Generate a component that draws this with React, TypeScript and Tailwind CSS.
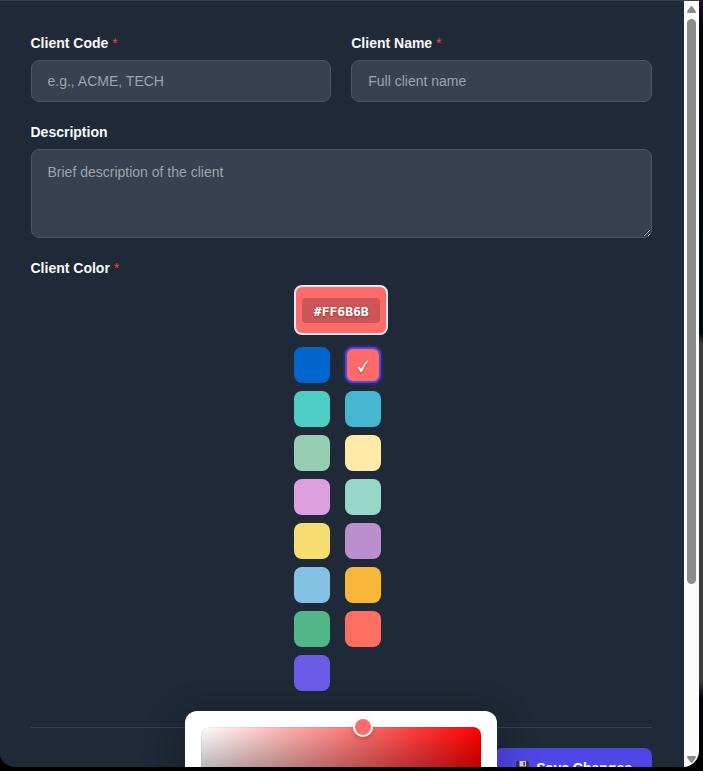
import React from 'react';

const swatches = [
  'bg-[#0066cc]', 'bg-[#ff6b6b]', 'bg-[#4ecdc4]', 'bg-[#45b7d1]', 'bg-[#96ceb4]',
  'bg-[#ffeaa7]', 'bg-[#dda0dd]', 'bg-[#98d8c8]', 'bg-[#f7dc6f]', 'bg-[#bb8fce]',
  'bg-[#85c1e2]', 'bg-[#f8b739]', 'bg-[#52b788]', 'bg-[#ff6f61]', 'bg-[#6c5ce7]',
];

function Label({ text, required }: { text: string; required?: boolean }) {
  return (
    <label className="block h-[17px] text-[14px] leading-[17px] font-bold text-[#f9fafb]">
      {text}
      {required && <span className="font-normal text-[#ef4444]"> *</span>}
    </label>
  );
}

const field =
  'block w-full rounded-lg border border-[#4b5563] bg-[#374151] px-4 text-[14px] leading-[17px] text-white placeholder:text-[#9ca3af] outline-none';

function Floppy() {
  return (
    <svg width="13" height="13" viewBox="0 0 13 13" className="relative -top-px left-px">
      <path d="M1 0h10.500l1.500 1.500V13H0V1z" fill="#3b3247" />
      <path d="M3.500 0h6.500v5.500H3.500z" fill="#d9d3e2" />
      <path d="M7.300 1h1.700v3.500H7.300z" fill="#4a3f58" />
      <path d="M2.500 7.500h8V13h-8z" fill="#ece8f4" />
    </svg>
  );
}

function Check() {
  return (
    <svg width="12" height="13" viewBox="0 0 12 13" className="mt-[3px] drop-shadow-[0_1px_1px_rgba(0,0,0,0.35)]">
      <path
        d="M.6 7.700Q1.500 6.500 2.700 7L4 9.200Q6.500 3.600 10.200.7L11.300.8Q7.800 5 5.200 11.200Q4.500 12 3.300 11.900Q2.200 9 .6 7.700z"
        fill="#fff"
      />
    </svg>
  );
}

function Scrollbar() {
  return (
    <div className="flex h-[766px] w-[15px] flex-none flex-col items-center bg-[#fcfcfc]">
      <svg className="mt-[5px] flex-none" width="9" height="7" viewBox="0 0 9 7">
        <path d="M4.500 0Q5 0 5.600.8L8.600 5Q9.400 7 8 7H1Q-.4 7 .4 5L3.400.8Q4 0 4.500 0z" fill="#8b8b8b" />
      </svg>
      <div className="mt-[6px] h-[565px] w-[9px] flex-none rounded-full bg-[#8b8b8b]" />
      <div className="flex-1" />
      <svg className="mb-[4px] flex-none" width="9" height="7" viewBox="0 0 9 7">
        <path d="M4.500 7Q5 7 5.600 6.200L8.600 2Q9.400 0 8 0H1Q-.4 0 .4 2L3.400 6.200Q4 7 4.500 7z" fill="#8b8b8b" />
      </svg>
    </div>
  );
}

function Picker() {
  return (
    <div className="absolute top-[711px] left-[186px] z-10 w-[312px] rounded-xl bg-white p-4 shadow-[0_10px_40px_rgba(0,0,0,0.3)]">
      <div className="relative h-[150px] rounded-lg bg-[linear-gradient(to_top,#000,transparent),linear-gradient(to_right,#fff,transparent)] bg-[#ff0000] shadow-[inset_0_0_0_1px_rgba(0,0,0,0.05)]">
        <div className="absolute -top-[10px] left-[152px] size-5 rounded-full border-2 border-white bg-[#ff6b6b] shadow-[0_2px_4px_rgba(0,0,0,0.2)]" />
      </div>
    </div>
  );
}

export default function App() {
  return (
    <div className="flex h-[771px] w-[703px] overflow-hidden bg-black bg-[linear-gradient(#1c102b_0px,#07050b_26px,#020305_45px,#02060b_333px,#3c3c3c_344px,#3c3c3c_680px,#02040a_698px,#000_771px)] font-['Liberation_Sans',Arial,sans-serif]">
      <div className="relative -ml-px flex h-[767px] w-[700px] flex-none overflow-hidden rounded-b-2xl border-t border-[#374151] bg-[#1f2937]">
        <div className="h-[766px] w-[685px] flex-none overflow-hidden pt-[34px] pr-8 pl-[31.5px]">
          <div className="grid grid-cols-2 gap-5">
            <div>
              <Label text="Client Code" required />
              <input className={`${field} mt-2 h-[42px]`} placeholder="e.g., ACME, TECH" />
            </div>
            <div>
              <Label text="Client Name" required />
              <input className={`${field} mt-2 h-[42px]`} placeholder="Full client name" />
            </div>
          </div>
          <div className="mt-[22px]">
            <Label text="Description" />
            <textarea className={`${field} mt-2 h-[89px] resize-y py-[14px]`} placeholder="Brief description of the client" />
          </div>
          <div className="mt-[22px]">
            <Label text="Client Color" required />
            <div className="mx-auto mt-2 w-[94px]">
              <div className="flex h-[50px] items-center justify-center rounded-lg border-2 border-[#e5e7eb] bg-[#ff6b6b]">
                <span className="flex h-[25px] w-[78px] items-center justify-center rounded bg-black/20 pt-[2px] font-['DejaVu_Sans_Mono',monospace] text-[13px] leading-[17px] font-bold text-white [text-shadow:0_1px_2px_rgba(0,0,0,0.3)]">
                  #FF6B6B
                </span>
              </div>
              <div className="mt-3 grid grid-cols-[36px_36px] gap-x-[15px] gap-y-2">
                {swatches.map((color, i) => (
                  <div
                    key={color}
                    className={`flex size-9 items-center justify-center rounded-lg ${color} ${
                      i === 1 ? 'border-2 border-[#4f46e5] shadow-[0_0_0_2px_rgba(79,70,229,0.2)]' : ''
                    }`}
                  >
                    {i === 1 && <Check />}
                  </div>
                ))}
              </div>
            </div>
          </div>
          <div className="mt-9 flex justify-end border-t border-[#374151] pt-5">
            <button className="flex h-[42px] w-[158px] items-center justify-end gap-2 rounded-lg bg-[#4f46e5] pr-5 pb-px text-[14px] leading-[17px] font-bold text-white">
              <Floppy />
              <span>Save Changes</span>
            </button>
          </div>
        </div>
        <Scrollbar />
        <div className="absolute -top-px left-0">
          <Picker />
        </div>
      </div>
    </div>
  );
}
